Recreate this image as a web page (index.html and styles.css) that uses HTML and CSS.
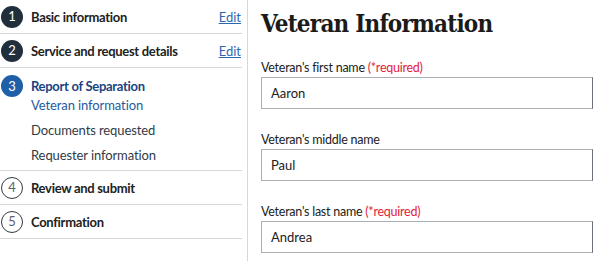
FILE: index.html
```html
<!DOCTYPE html>
<html>
<head>
<meta charset="utf-8">
<link rel="stylesheet" href="styles.css">
</head>
<body>
<div class="page">
  <aside class="sidebar">
    <ol class="steps">
      <li class="step done">
        <span class="num">1</span>
        <span class="title">Basic information</span>
        <a class="edit" href="#">Edit</a>
      </li>
      <li class="step done">
        <span class="num">2</span>
        <span class="title">Service and request details</span>
        <a class="edit" href="#">Edit</a>
      </li>
      <li class="step current">
        <div class="step-head">
          <span class="num">3</span>
          <span class="title">Report of Separation</span>
        </div>
        <ul class="substeps">
          <li class="sub active">Veteran information</li>
          <li class="sub">Documents requested</li>
          <li class="sub">Requester information</li>
        </ul>
      </li>
      <li class="step todo">
        <span class="num">4</span>
        <span class="title">Review and submit</span>
      </li>
      <li class="step todo">
        <span class="num">5</span>
        <span class="title">Confirmation</span>
      </li>
    </ol>
  </aside>
  <main class="content">
    <h1 class="heading">Veteran Information</h1>
    <div class="field">
      <label class="label">Veteran's first name <span class="req">(*required)</span></label>
      <div class="input">Aaron</div>
    </div>
    <div class="field">
      <label class="label">Veteran's middle name</label>
      <div class="input">Paul</div>
    </div>
    <div class="field">
      <label class="label">Veteran's last name <span class="req">(*required)</span></label>
      <div class="input">Andrea</div>
    </div>
  </main>
</div>
</body>
</html>
```

FILE: styles.css
```css
html, body {
  margin: 0;
  padding: 0;
  background: #ffffff;
}
body {
  font-family: "Lato", "Noto Sans", sans-serif;
  color: #212121;
  width: 600px;
  height: 261px;
  overflow: hidden;
}
.page {
  display: flex;
  align-items: stretch;
  height: 261px;
}
.sidebar {
  width: 242px;
  padding-right: 5px;
  border-right: 1px solid #d6d7d9;
  flex: none;
}
.steps {
  list-style: none;
  margin: 0;
  padding: 0;
}
.step {
  border-bottom: 1px solid #d6d7d9;
}
.step.done, .step.todo {
  display: flex;
  align-items: center;
  height: 33px;
}
.num {
  flex: none;
  width: 22px;
  height: 22px;
  box-sizing: border-box;
  border-radius: 50%;
  margin-left: 1px;
  margin-right: 8px;
  display: flex;
  align-items: center;
  justify-content: center;
  font-size: 13px;
  line-height: 1;
}
.done .num {
  background: #212e3c;
  color: #ffffff;
}
.todo .num {
  border: 1.5px solid #323a45;
  color: #5b616b;
  background: #ffffff;
}
.current .num {
  background: #1f5fa8;
  color: #ffffff;
}
.title {
  font-weight: 700;
  font-size: 13px;
  letter-spacing: -0.3px;
  color: #212121;
  flex: 1;
}
.edit {
  font-size: 13px;
  color: #2e67b1;
  text-decoration: underline;
  margin-right: 1px;
}
.step.current {
  padding-top: 9px;
  padding-bottom: 5px;
}
.step-head {
  display: flex;
  align-items: center;
  height: 18px;
}
.current .title {
  color: #1a4480;
}
.substeps {
  list-style: none;
  margin: 0;
  padding: 0 0 0 31px;
  display: flex;
  flex-direction: column;
  gap: 5px;
}
.sub {
  font-size: 13px;
  line-height: 20px;
  letter-spacing: -0.1px;
  color: #323a45;
}
.sub.active {
  color: #1f5a9e;
}
.content {
  flex: 1;
  padding-left: 13px;
  padding-right: 7px;
}
.heading {
  font-family: "DejaVu Serif Condensed", "DejaVu Serif", serif;
  font-weight: 700;
  font-size: 24px;
  letter-spacing: -0.8px;
  line-height: 30px;
  margin: 9px 0 0 0;
  color: #1b1b1b;
}
.field {
  display: flex;
  flex-direction: column;
}
.field:first-of-type {
  margin-top: 21px;
}
.field + .field {
  margin-top: 23px;
}
.label {
  font-size: 12.5px;
  letter-spacing: -0.25px;
  line-height: 16px;
  margin-bottom: 1px;
  color: #212121;
}
.req {
  color: #e31c3d;
}
.input {
  box-sizing: border-box;
  height: 32px;
  border: 1px solid #a9aeb4;
  border-right-color: #6b717a;
  padding: 0 9px;
  display: flex;
  align-items: center;
  font-size: 13px;
  color: #212121;
}
```
